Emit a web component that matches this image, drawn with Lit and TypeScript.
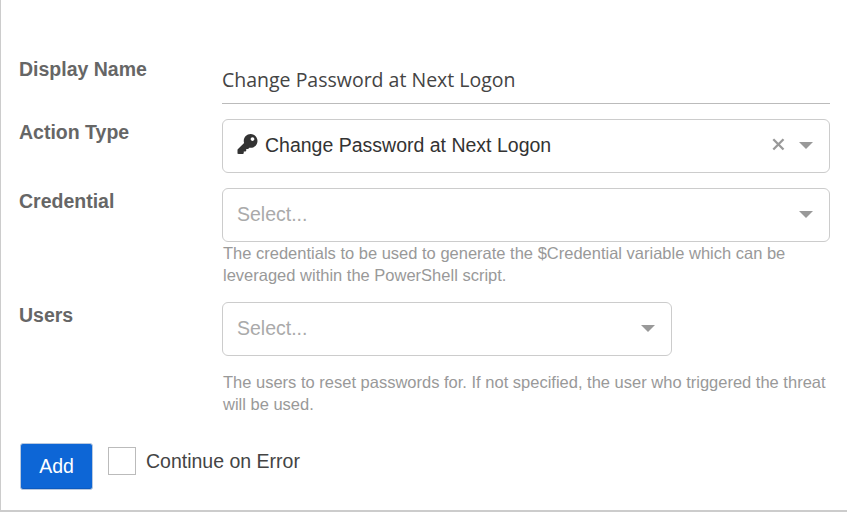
import { LitElement, html, css, svg, nothing } from "lit";
import { customElement, property } from "lit/decorators.js";

@customElement("select-box")
class SelectBox extends LitElement {
  @property() value = "";
  @property({ type: Boolean }) clearable = false;

  static styles = css`
    :host { display: block; height: 54px; }
    .box {
      box-sizing: border-box; height: 54px; border: 1px solid #ccc; border-radius: 6px;
      display: flex; align-items: center; padding: 0 16px 0 14px; background: #fff;
      font: 19.5px/24px "Liberation Sans", Arial, sans-serif; color: #333;
    }
    .key { width: 21px; height: 20px; margin: 0 7px 4px 0; flex: none; }
    .text { flex: 1; white-space: nowrap; padding-bottom: 2px; }
    .placeholder { color: #aaa; }
    .clear { width: 13px; height: 13px; margin: 0 14px 3px 0; }
    .arrow { width: 14px; height: 7px; display: block; margin-bottom: 2px; }
  `;

  render() {
    return html`<div class="box">
      ${this.value
        ? html`<svg class="key" viewBox="0 0 512 512">${svg`<path fill="#333" d="M512 176.001C512 273.203 433.202 352 336 352c-11.22 0-22.19-1.062-32.827-3.069l-24.012 27.014A23.999 23.999 0 0 1 261.223 384H224v40c0 13.255-10.745 24-24 24h-40v40c0 13.255-10.745 24-24 24H24c-13.255 0-24-10.745-24-24v-78.059c0-6.365 2.529-12.47 7.029-16.971l161.802-161.802C163.108 213.814 160 195.271 160 176 160 78.798 238.797.001 335.999 0 433.488-.001 512 78.511 512 176.001zM336 128c0 26.51 21.49 48 48 48s48-21.49 48-48-21.49-48-48-48-48 21.49-48 48z"/>`}</svg>
            <span class="text">${this.value}</span>`
        : html`<span class="text placeholder">Select...</span>`}
      ${this.clearable
        ? html`<svg class="clear" viewBox="0 0 13 13"><path d="M1.3 1.3l10.2 10.2M11.5 1.3L1.3 11.5" stroke="#999" stroke-width="2.3" /></svg>`
        : nothing}
      <svg class="arrow" viewBox="0 0 14 7"><path d="M0 0h14L7 7z" fill="#999" /></svg>
    </div>`;
  }
}

@customElement("app-root")
class AppRoot extends LitElement {
  static styles = css`
    :host {
      display: block; box-sizing: border-box; width: 847px; height: 512px; overflow: hidden;
      border-left: 1px solid #ccc; border-bottom: 2px solid #ccc; background: #fff;
      font-family: "Liberation Sans", Arial, sans-serif;
    }
    .form { padding: 57px 17px 0 18px; }
    .row { display: grid; grid-template-columns: 203px 608px; }
    .label { font-size: 19.5px; line-height: 24px; font-weight: 700; color: #666; }
    .input {
      box-sizing: border-box; height: 47px; border-bottom: 1px solid #bbb; padding-top: 9px;
      font: 19.5px/28px "Open Sans", sans-serif; color: #444; white-space: nowrap;
    }
    .action { margin-top: 15px; }
    .credential { margin-top: 15px; }
    .users { margin-top: 16px; }
    .users select-box { width: 450px; }
    .help { font-size: 16.5px; line-height: 22px; color: #999; padding-left: 1px; white-space: nowrap; }
    .users .help { margin-top: 15px; }
    .label.low { padding-top: 1px; }
    .footer { display: flex; margin-top: 28px; padding-left: 1px; }
    .add {
      box-sizing: border-box; width: 73px; height: 47px; border: 1px solid #b9c9df; border-radius: 3px;
      background: #0d66d6; color: #fff; font: 19.5px/44px "Liberation Sans", Arial, sans-serif;
      padding: 0 0 2px; box-shadow: inset 0 -1px 0 #0b5ac0;
    }
    .check { box-sizing: border-box; width: 28px; height: 28px; border: 1px solid #bbb; margin: 4px 10px 0 15px; }
    .continue { font-size: 19.5px; line-height: 24px; color: #444; margin-top: 6px; white-space: nowrap; }
  `;

  render() {
    return html`<div class="form">
      <div class="row">
        <div class="label">Display Name</div>
        <div class="input">Change Password at Next Logon</div>
      </div>
      <div class="row action">
        <div class="label low">Action Type</div>
        <select-box value="Change Password at Next Logon" clearable></select-box>
      </div>
      <div class="row credential">
        <div class="label low">Credential</div>
        <div>
          <select-box></select-box>
          <div class="help">The credentials to be used to generate the $Credential variable which can be<br />leveraged within the PowerShell script.</div>
        </div>
      </div>
      <div class="row users">
        <div class="label low">Users</div>
        <div>
          <select-box></select-box>
          <div class="help">The users to reset passwords for. If not specified, the user who triggered the threat<br />will be used.</div>
        </div>
      </div>
      <div class="footer">
        <button class="add">Add</button>
        <span class="check"></span>
        <span class="continue">Continue on Error</span>
      </div>
    </div>`;
  }
}
